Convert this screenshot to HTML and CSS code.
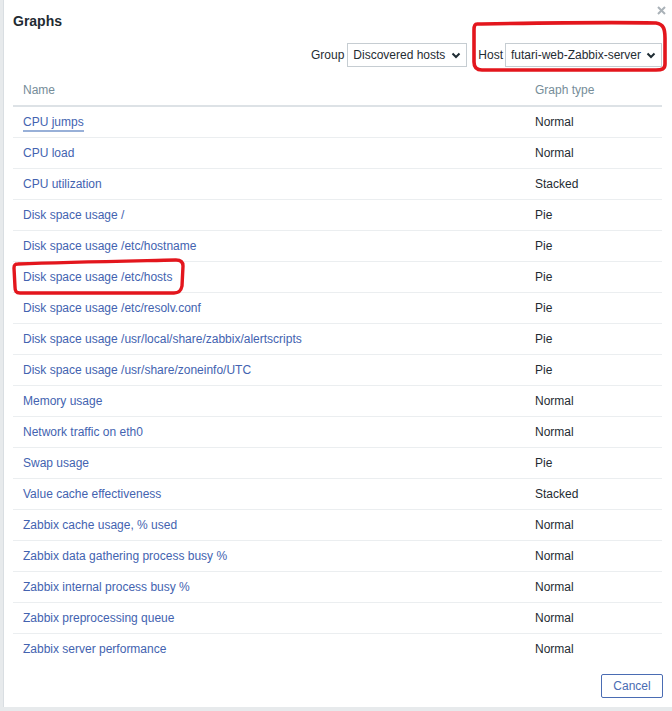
FILE: index.html
```html
<!DOCTYPE html>
<html>
<head>
<meta charset="utf-8">
<link rel="stylesheet" href="styles.css">
</head>
<body>
<div class="dialog">
  <div class="head">
    <h4 class="title">Graphs</h4>
    <span class="close"><svg width="9" height="9" viewBox="0 0 9 9"><path d="M1 1L8 8M8 1L1 8" stroke="#aab2b8" stroke-width="2"/></svg></span>
  </div>
  <div class="filter">
    <span class="lbl">Group</span>
    <div class="select sel-group"><span>Discovered hosts</span><svg class="chev" width="10" height="7" viewBox="0 0 10 7"><path d="M1.5 1.5L5 5L8.5 1.5" fill="none" stroke="#1f2c33" stroke-width="2"/></svg></div>
    <span class="lbl lbl-host">Host</span>
    <div class="select sel-host"><span>futari-web-Zabbix-server</span><svg class="chev" width="10" height="7" viewBox="0 0 10 7"><path d="M1.5 1.5L5 5L8.5 1.5" fill="none" stroke="#1f2c33" stroke-width="2"/></svg></div>
  </div>
  <table class="list">
    <thead>
      <tr><th class="c-name">Name</th><th>Graph type</th></tr>
    </thead>
    <tbody>
      <tr><td><a class="link focus">CPU jumps</a></td><td>Normal</td></tr>
      <tr><td><a class="link">CPU load</a></td><td>Normal</td></tr>
      <tr><td><a class="link">CPU utilization</a></td><td>Stacked</td></tr>
      <tr><td><a class="link">Disk space usage /</a></td><td>Pie</td></tr>
      <tr><td><a class="link">Disk space usage /etc/hostname</a></td><td>Pie</td></tr>
      <tr><td><a class="link">Disk space usage /etc/hosts</a></td><td>Pie</td></tr>
      <tr><td><a class="link">Disk space usage /etc/resolv.conf</a></td><td>Pie</td></tr>
      <tr><td><a class="link">Disk space usage /usr/local/share/zabbix/alertscripts</a></td><td>Pie</td></tr>
      <tr><td><a class="link">Disk space usage /usr/share/zoneinfo/UTC</a></td><td>Pie</td></tr>
      <tr><td><a class="link">Memory usage</a></td><td>Normal</td></tr>
      <tr><td><a class="link">Network traffic on eth0</a></td><td>Normal</td></tr>
      <tr><td><a class="link">Swap usage</a></td><td>Pie</td></tr>
      <tr><td><a class="link">Value cache effectiveness</a></td><td>Stacked</td></tr>
      <tr><td><a class="link">Zabbix cache usage, % used</a></td><td>Normal</td></tr>
      <tr><td><a class="link">Zabbix data gathering process busy %</a></td><td>Normal</td></tr>
      <tr><td><a class="link">Zabbix internal process busy %</a></td><td>Normal</td></tr>
      <tr><td><a class="link">Zabbix preprocessing queue</a></td><td>Normal</td></tr>
      <tr class="last"><td><a class="link">Zabbix server performance</a></td><td>Normal</td></tr>
    </tbody>
  </table>
  <div class="foot">
    <button class="btn">Cancel</button>
  </div>
</div>
<svg class="marks" width="672" height="711" viewBox="0 0 672 711">
  <path d="M477 24 C540 23 600 22 656 23 C664 24 665 30 665 38 L665 64 C665 69 662 70 656 70 L482 70 C476 70 474 67 474 62 L474 30 C474 26 475 24 477 24" fill="none" stroke="#e3161d" stroke-width="3.6" stroke-linecap="round"/>
  <path d="M18 264 C70 262 130 261 176 260 C181 260 183 262 183 266 L182 286 C181 291 179 293 174 293 L20 293 C16 293 15 291 15 287 L14 268 C14 265 15 264 18 264" fill="none" stroke="#e3161d" stroke-width="3.4" stroke-linecap="round"/>
</svg>
</body>
</html>
```

FILE: styles.css
```css
html, body {
  margin: 0;
  padding: 0;
}
body {
  background: #e7eaec;
  width: 672px;
  height: 711px;
  overflow: hidden;
  position: relative;
  font-family: "Liberation Sans", Arial, sans-serif;
  font-size: 12px;
  color: #1f2c33;
}
.dialog {
  margin-left: 3px;
  width: 669px;
  height: 707px;
  box-sizing: border-box;
  background: #fff;
  border-left: 1px solid #d9dee2;
  padding: 0 10px 0 9px;
  display: flex;
  flex-direction: column;
}
.head {
  display: flex;
  justify-content: space-between;
  align-items: flex-start;
  height: 30px;
}
.title {
  margin: 0;
  padding-top: 12px;
  font-size: 14px;
  line-height: 18px;
  font-weight: bold;
  color: #1f2c33;
}
.close {
  margin-top: 6px;
  margin-right: -4px;
  line-height: 0;
}
.filter {
  margin-top: 13px;
  display: flex;
  justify-content: flex-end;
  align-items: center;
  height: 24px;
}
.lbl {
  margin-right: 3px;
}
.lbl-host {
  margin-left: 11px;
  margin-right: 2px;
}
.select {
  box-sizing: border-box;
  height: 24px;
  border: 1px solid #c6cdd2;
  display: flex;
  align-items: center;
  justify-content: space-between;
  padding: 0 5px 0 5px;
  background: #fff;
}
.sel-group { width: 120px; }
.sel-host { width: 157px; }
.chev { margin-left: 4px; }
.list {
  margin-top: 8px;
  width: 649px;
  border-collapse: collapse;
}
.list th {
  text-align: left;
  font-weight: normal;
  color: #768d99;
  height: 30px;
  padding: 0 10px;
  border-bottom: 2px solid #dde2e6;
  vertical-align: middle;
}
.list th.c-name { width: 492px; }
.list td {
  height: 30px;
  padding: 0 10px;
  border-bottom: 1px solid #ebeef0;
  vertical-align: middle;
}
.list tr.last td { border-bottom: none; }
.link {
  color: #4363b0;
  text-decoration: none;
}
.link.focus {
  border-bottom: 2px solid #98b0d8;
  padding-bottom: 1px;
}
.foot {
  margin-top: 10px;
  display: flex;
  justify-content: flex-end;
  padding-right: 0;
}
.btn {
  box-sizing: border-box;
  height: 24px;
  width: 62px;
  background: #fff;
  border: 1px solid #4a6cb3;
  border-radius: 2px;
  color: #4a6cb3;
  font-family: "Liberation Sans", Arial, sans-serif;
  font-size: 12px;
  padding: 0;
  margin-right: -1px;
}
.marks {
  position: absolute;
  left: 0;
  top: 0;
  pointer-events: none;
}
```
